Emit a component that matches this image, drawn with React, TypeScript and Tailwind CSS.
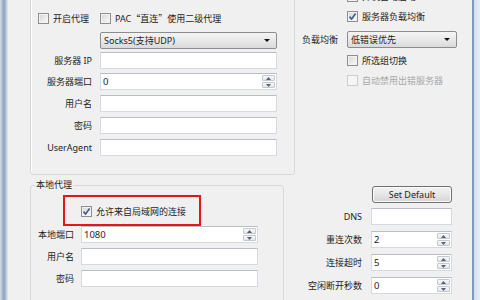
import type { ReactNode } from 'react'
import clsx from 'clsx'

function CheckBox({ checked, disabled }: { checked?: boolean; disabled?: boolean }) {
  return (
    <span
      className={clsx(
        'flex h-[11px] w-[11px] shrink-0 items-center justify-center border',
        disabled
          ? 'border-[#cdcdcd] bg-[#f5f5f5]'
          : 'border-[#8f8f8f] bg-linear-to-br from-[#d6d6d6] to-[#fbfbfb] shadow-[inset_0_0_0_1px_#f2f2f2]',
      )}
    >
      {checked ? (
        <svg width="9" height="9" viewBox="0 0 9 9">
          <path d="M1.5 4.6 L3.6 7 L7.6 1.6" fill="none" stroke="#3d5a8c" strokeWidth="1.6" />
        </svg>
      ) : null}
    </span>
  )
}

function CheckRow({
  label,
  checked,
  disabled,
  className,
}: {
  label: ReactNode
  checked?: boolean
  disabled?: boolean
  className?: string
}) {
  return (
    <div className={clsx('flex h-[12px] items-center gap-[4px]', className)}>
      <CheckBox checked={checked} disabled={disabled} />
      <span className={clsx('whitespace-nowrap leading-none', disabled ? 'text-[#a8a8a8]' : 'text-[#1e1e1e]')}>
        {label}
      </span>
    </div>
  )
}

function Spinner() {
  return (
    <div className="ml-auto flex h-full w-[15px] shrink-0 flex-col gap-[1px] p-[1px]">
      <div className="flex flex-1 items-center justify-center rounded-[1px] border border-[#c4c8cf] bg-linear-to-b from-[#f7f8fa] to-[#e3e6eb]">
        <svg width="5" height="3" viewBox="0 0 5 3">
          <path d="M0 3 L2.5 0 L5 3 Z" fill="#5a6270" />
        </svg>
      </div>
      <div className="flex flex-1 items-center justify-center rounded-[1px] border border-[#c4c8cf] bg-linear-to-b from-[#f7f8fa] to-[#e3e6eb]">
        <svg width="5" height="3" viewBox="0 0 5 3">
          <path d="M0 0 L2.5 3 L5 0 Z" fill="#5a6270" />
        </svg>
      </div>
    </div>
  )
}

function TextBox({
  value,
  spin,
  className,
}: {
  value?: string
  spin?: boolean
  className?: string
}) {
  return (
    <div
      className={clsx(
        'flex h-[17px] items-center border border-[#d6d9df] border-t-[#b9bdc6] bg-white',
        className,
      )}
    >
      <span className="pl-[2px] text-[9.5px] leading-none text-[#1e1e1e]">{value}</span>
      {spin ? <Spinner /> : null}
    </div>
  )
}

function ComboBox({ value, className }: { value: string; className?: string }) {
  return (
    <div
      className={clsx(
        'flex h-[17px] items-center rounded-[2px] border border-[#8c8c8c] bg-linear-to-b from-[#f4f4f4] via-[#e9e9e9] to-[#dadada] pl-[3px] pr-[6px]',
        className,
      )}
    >
      <span className="leading-none text-[#1e1e1e]">{value}</span>
      <svg className="ml-auto" width="6" height="3" viewBox="0 0 6 3">
        <path d="M0 0 L6 0 L3 3 Z" fill="#111" />
      </svg>
    </div>
  )
}

function FieldRow({
  label,
  labelWidth,
  gap,
  children,
  className,
}: {
  label: string
  labelWidth: string
  gap: string
  children: ReactNode
  className?: string
}) {
  return (
    <div className={clsx('flex items-center', gap, className)}>
      <span className={clsx('shrink-0 whitespace-nowrap text-right leading-none text-[#1e1e1e]', labelWidth)}>
        {label}
      </span>
      {children}
    </div>
  )
}

function WinButton({ label, className }: { label?: string; className?: string }) {
  return (
    <div
      className={clsx(
        'flex h-[17px] items-center justify-center rounded-[3px] border border-[#707070] bg-linear-to-b from-[#f3f3f3] via-[#e6e6e6] to-[#d4d4d4] shadow-[inset_0_0_0_1px_#fbfbfb]',
        className,
      )}
    >
      {label ? <span className="leading-none text-[#1e1e1e]">{label}</span> : null}
    </div>
  )
}

export default function App() {
  return (
    <div className="flex h-[300px] w-[480px] overflow-hidden bg-[#f0f0f0] font-['Noto_Sans','Noto_Sans_CJK_SC',sans-serif] text-[9px]">
      {/* window frame, left */}
      <div className="w-[8px] shrink-0 bg-linear-to-r from-[#d5dee8] via-[#8aa2be] to-[#e4eaf1]" />

      <div className="flex w-[464px] shrink-0 flex-col">
        {/* upper part */}
        <div className="flex h-[175px] shrink-0">
          <div className="ml-[22px] mt-[-10px] flex h-[185px] w-[265px] shrink-0 flex-col rounded-[3px] border border-[#d5d9de] shadow-[inset_1px_1px_0_#fff]">
            <div className="mt-[21px] flex pl-[7px]">
              <CheckRow label="开启代理" className="w-[62px]" />
              <CheckRow
                label={
                  <>
                    PAC<span className="font-['Noto_Sans_CJK_SC',sans-serif]">“直连”</span>使用二级代理
                  </>
                }
              />
            </div>
            <ComboBox value="Socks5(支持UDP)" className="ml-[69px] mt-[8px] w-[177px]" />
            <FieldRow label="服务器 IP" labelWidth="w-[61px]" gap="gap-[8px]" className="mt-[3px]">
              <TextBox className="w-[177px]" />
            </FieldRow>
            <FieldRow label="服务器端口" labelWidth="w-[61px]" gap="gap-[8px]" className="mt-[4px]">
              <TextBox value="0" spin className="w-[177px]" />
            </FieldRow>
            <FieldRow label="用户名" labelWidth="w-[61px]" gap="gap-[8px]" className="mt-[5px]">
              <TextBox className="w-[177px]" />
            </FieldRow>
            <FieldRow label="密码" labelWidth="w-[61px]" gap="gap-[8px]" className="mt-[5px]">
              <TextBox className="w-[177px]" />
            </FieldRow>
            <FieldRow label="UserAgent" labelWidth="w-[61px]" gap="gap-[8px]" className="mt-[5px]">
              <TextBox className="w-[177px]" />
            </FieldRow>
          </div>

          <div className="mt-[-10px] flex w-[177px] shrink-0 flex-col">
            <CheckRow label="开机自动启动" className="pl-[52px]" />
            <CheckRow label="服务器负载均衡" checked className="mt-[8px] pl-[52px]" />
            <div className="mt-[9px] flex items-center gap-[7px] pl-[7px]">
              <span className="w-[38px] whitespace-nowrap leading-none text-[#1e1e1e]">负载均衡</span>
              <ComboBox value="低错误优先" className="w-[110px]" />
            </div>
            <CheckRow label="所选组切换" className="mt-[6px] pl-[52px]" />
            <CheckRow label="自动禁用出错服务器" disabled className="mt-[8px] pl-[52px]" />
          </div>
        </div>

        {/* lower part */}
        <div className="flex">
          <fieldset className="ml-[22px] mt-[4px] h-[140px] w-[254px] shrink-0 rounded-[3px] border border-[#d5d9de]">
            <legend className="ml-[4px] h-[12px] px-[1px] leading-[12px] text-[#1e1e1e]">本地代理</legend>
            <div className="flex flex-col">
              <div className="ml-[32px] mt-[4px] flex h-[31px] w-[138px] items-center border-2 border-[#e3161b] pl-[16px] pt-[2px]">
                <CheckRow label="允许来自局域网的连接" checked />
              </div>
              <FieldRow label="本地端口" labelWidth="w-[43px]" gap="gap-[7px]">
                <TextBox value="1080" spin className="w-[177px]" />
              </FieldRow>
              <FieldRow label="用户名" labelWidth="w-[43px]" gap="gap-[7px]" className="mt-[5px]">
                <TextBox className="w-[177px]" />
              </FieldRow>
              <FieldRow label="密码" labelWidth="w-[43px]" gap="gap-[7px]" className="mt-[5px]">
                <TextBox className="w-[177px]" />
              </FieldRow>
            </div>
          </fieldset>

          <div className="flex w-[188px] shrink-0 flex-col">
            <WinButton label="Set Default" className="ml-[88px] mt-[11px] h-[16px] w-[80px]" />
            <FieldRow label="DNS" labelWidth="w-[78px]" gap="gap-[9px]" className="mt-[5px]">
              <TextBox className="h-[16px] w-[81px]" />
            </FieldRow>
            <FieldRow label="重连次数" labelWidth="w-[78px]" gap="gap-[9px]" className="mt-[6px]">
              <TextBox value="2" spin className="h-[16px] w-[81px]" />
            </FieldRow>
            <FieldRow label="连接超时" labelWidth="w-[78px]" gap="gap-[9px]" className="mt-[6px]">
              <TextBox value="5" spin className="h-[16px] w-[81px]" />
            </FieldRow>
            <FieldRow label="空闲断开秒数" labelWidth="w-[78px]" gap="gap-[9px]" className="mt-[6px]">
              <TextBox value="0" spin className="h-[16px] w-[81px]" />
            </FieldRow>
            <div className="ml-[31px] mt-[9px] flex gap-[8px]">
              <WinButton className="w-[62px]" />
              <WinButton className="w-[62px]" />
            </div>
          </div>
        </div>
      </div>

      {/* window frame, right */}
      <div className="flex w-[8px] shrink-0">
        <div className="w-[2px] bg-[#7e9abb]" />
        <div className="flex-1 bg-linear-to-r from-[#cfdeee] to-[#e6eef7]" />
      </div>
    </div>
  )
}
